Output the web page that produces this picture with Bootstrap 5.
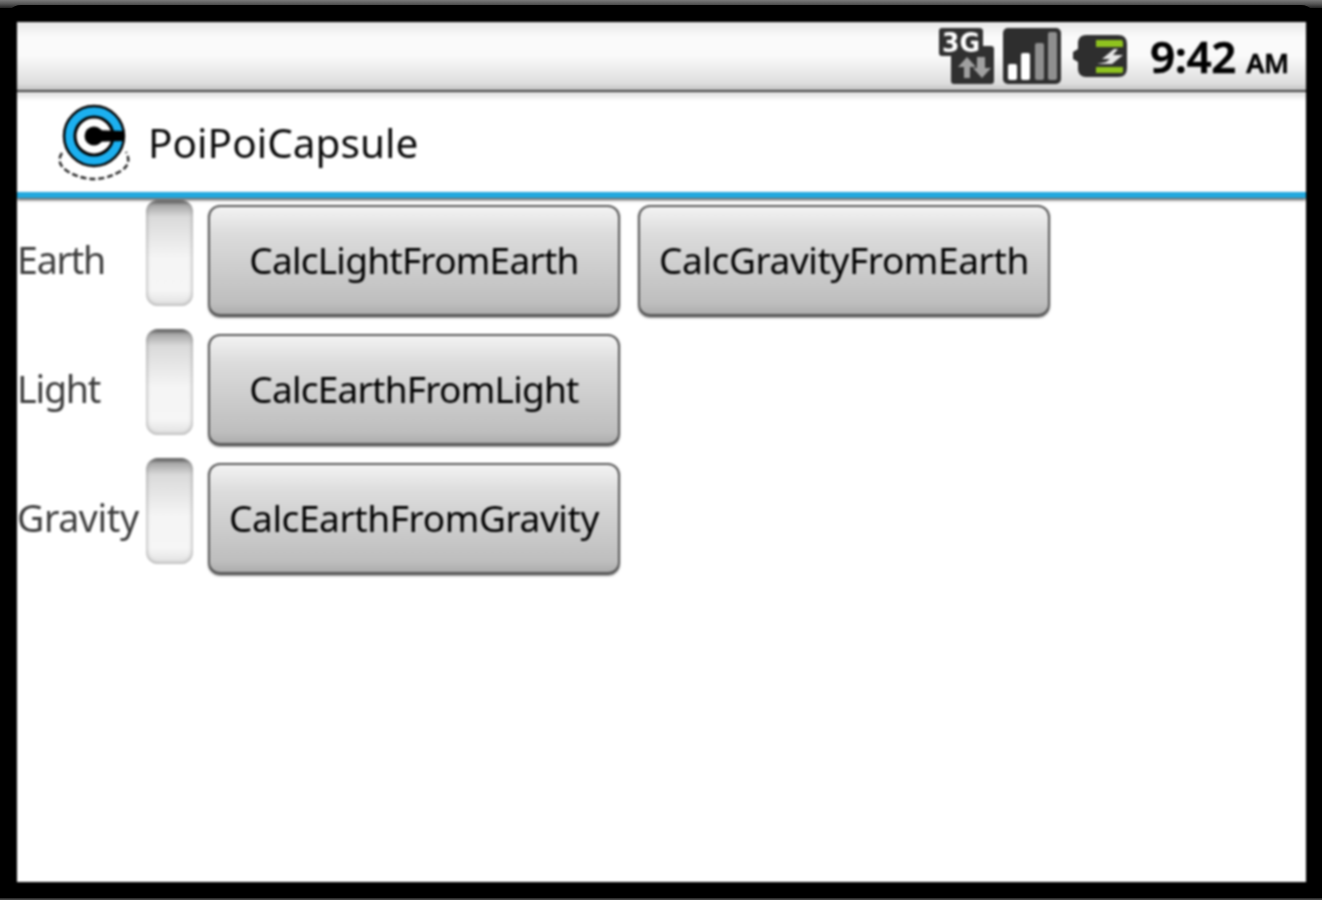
<!DOCTYPE html>
<html lang="en"><head><meta charset="utf-8"><title>PoiPoiCapsule</title>
<link href="https://cdn.jsdelivr.net/npm/bootstrap@5.3.0/dist/css/bootstrap.min.css" rel="stylesheet">
<style>
html,body{margin:0;height:900px;overflow:hidden;background:#000}
.bezel{width:1322px;height:900px;background:#000;padding:22px 16px 18px 17px;position:relative;overflow:hidden;font-family:"Noto Sans","Open Sans",sans-serif}
.bezel-top{position:absolute;left:0;right:0;top:0;height:8px;background:linear-gradient(#7a7a7a,#555 50%,#222)}
.bezel-top::after{content:"";position:absolute;left:5px;right:5px;top:5px;height:24px;background:#000;border-radius:16px 16px 0 0}
.bezel-bot{position:absolute;left:0;right:0;bottom:0;height:2px;background:linear-gradient(#222,#555)}
.screen{position:relative;z-index:1;height:860px;background:#fff;filter:blur(.8px);overflow:hidden}
.statusbar{height:70px;background:linear-gradient(#e8e8e8,#fafafa 22%,#fafafa 50%,#dedede 90%,#c4c4c4);border-bottom:2px solid #444;padding-right:17px}
.clock{font-size:44px;font-weight:600;color:#000;line-height:1;margin-left:22px;letter-spacing:-.4px;-webkit-text-stroke:.6px #000}
.clock small{font-size:27px;font-weight:600;letter-spacing:-.2px;margin-left:-1px}
.icon3g{margin-right:8px}
.iconbars{margin-right:11px}
.titlebar{height:100px;background:linear-gradient(#dcdcdc,#fff 9%);padding-left:41px}
.apptitle{font-size:40.5px;color:#0a0a0a;margin-left:15px;margin-top:2px;line-height:1;letter-spacing:.05px}
.blue{height:6px;background:#22a8de;box-shadow:0 2px 3px #555}
.formrow{height:129px;padding-top:2px}
.lbl{width:129px;font-size:37.5px;color:#3c3c3c;line-height:1;margin-top:41px;letter-spacing:-1.2px}
.lbl-wide{letter-spacing:-.4px}
.edit{width:47px;height:106px;border-radius:12px;background:linear-gradient(#444,#a8a8a8 5%,#dadada 16%,#f5f5f5 55%,#f6f6f6 85%,#e0e0e0);box-shadow:inset 0 0 4px #8e8e8e}
.calc{width:412px;height:112px;margin-left:15px;margin-top:5px;border-radius:12px;border:2px solid #5a5a5a;border-bottom-width:3px;background:linear-gradient(#f3f3f3,#dcdcdc 25%,#bebebe 90%,#adadad);font-size:37px;color:#000;padding:0 0 2px;letter-spacing:-.75px;box-shadow:0 1px 2px #999;line-height:1}
.calc:hover{background:linear-gradient(#f3f3f3,#dcdcdc 25%,#bebebe 90%,#adadad);color:#000;border-color:#5a5a5a}
.calc+.calc{margin-left:18px}
.calc-wide{letter-spacing:-.4px}
</style></head><body>
<div class="bezel">
<div class="bezel-top"></div><div class="bezel-bot"></div>
<div class="screen">
<div class="statusbar d-flex align-items-center justify-content-end">
<svg class="icon3g" width="57" height="56" viewBox="0 0 57 56"><path d="M4 0h37q4 0 4 3v15h8q3 0 3 3v32q0 3-3 3H16q-3 0-3-3V28H4q-3 0-3-3V3q0-3 3-3z" fill="#303030"/><text x="4" y="24" font-family="DejaVu Sans" font-weight="700" font-size="27" fill="#fff" textLength="38" lengthAdjust="spacingAndGlyphs">3G</text><path d="M26 50V39h-6l9-10 9 10h-6v11z" fill="#a0a0a0"/><path d="M39 29v11h-4l9 10 9-10h-6V29z" fill="#a0a0a0"/></svg>
<svg class="iconbars" width="58" height="56" viewBox="0 0 58 56"><rect width="58" height="56" rx="5" fill="#2e2e2e"/><rect x="5" y="36" width="9" height="16" rx="2" fill="#fff"/><rect x="18" y="25" width="9" height="27" rx="2" fill="#fff"/><rect x="32" y="15" width="9" height="37" rx="2" fill="#8f8f8f"/><rect x="45" y="4" width="9" height="48" rx="2" fill="#8f8f8f"/></svg>
<svg width="56" height="44" viewBox="0 0 56 44"><path d="M14 1h32q9 0 9 9v24q0 9-9 9H14q-7 0-8-7v-8l-5-3v-7l5-3v-7q1-7 8-7z" fill="#2e2e2e"/><path d="M24 6h26l1 2v5H24zM24 33h27v5l-1 1H24z" fill="#8fc31f"/><path d="M42 15 30 25h8l-4 3-9 2h15l11-9h-10l5-6z" fill="#e6e6e6"/></svg>
<div class="clock">9:42 <small>AM</small></div>
</div>
<div class="titlebar d-flex align-items-center">
<svg width="75" height="78" viewBox="0 0 75 78"><path d="M4 50C-1 57 2 63 9 68q27 16 54 0c8-5 9-12 5-19" fill="none" stroke="#222" stroke-width="2.4" stroke-dasharray="6 3"/><circle cx="36" cy="33" r="30" fill="#1cb0f0" stroke="#000" stroke-width="2.5"/><circle cx="36" cy="33" r="19" fill="#fff" stroke="#000" stroke-width="3"/><circle cx="36" cy="33" r="9.5" fill="#000"/><path d="M36 27 66 28v10L36 39z" fill="#000"/></svg>
<span class="apptitle">PoiPoiCapsule</span>
</div>
<div class="blue"></div>
<main>
<div class="formrow d-flex align-items-start"><label class="lbl">Earth</label><div class="edit"></div><button class="btn calc" type="button">CalcLightFromEarth</button><button class="btn calc calc-wide" type="button">CalcGravityFromEarth</button></div>
<div class="formrow d-flex align-items-start"><label class="lbl">Light</label><div class="edit"></div><button class="btn calc" type="button">CalcEarthFromLight</button></div>
<div class="formrow d-flex align-items-start"><label class="lbl lbl-wide">Gravity</label><div class="edit"></div><button class="btn calc calc-wide" type="button">CalcEarthFromGravity</button></div>
</main>
</div>
</div>
<script src="https://cdn.jsdelivr.net/npm/bootstrap@5.3.0/dist/js/bootstrap.bundle.min.js"></script>
</body></html>
